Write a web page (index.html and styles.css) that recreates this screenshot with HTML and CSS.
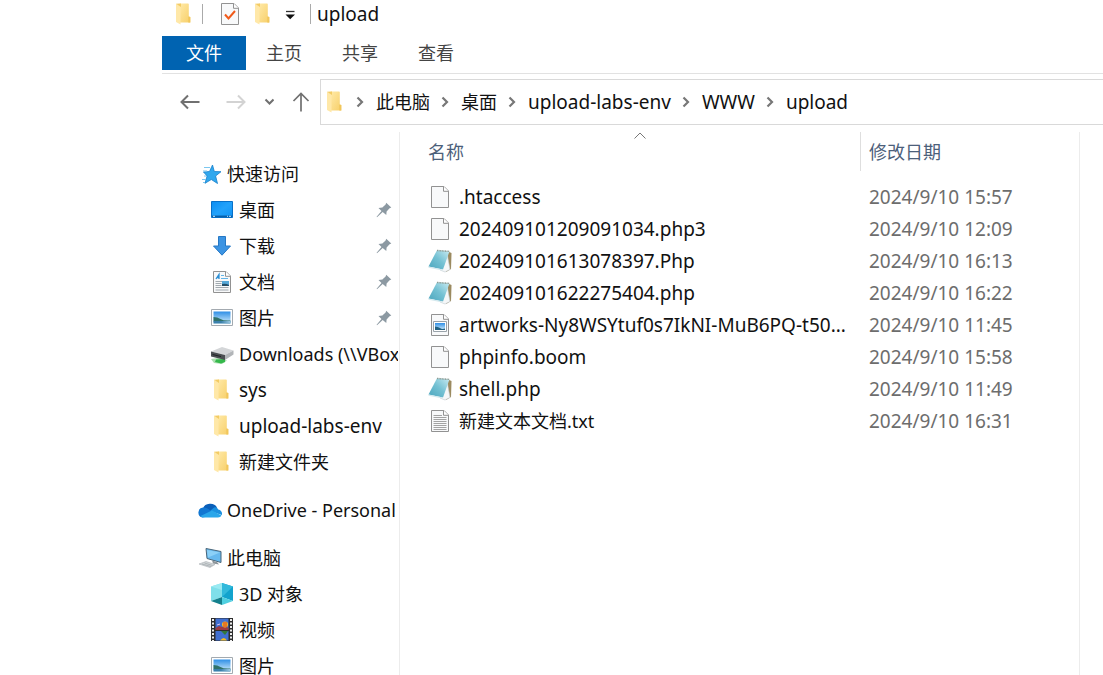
FILE: index.html
```html
<!DOCTYPE html>
<html lang="zh-CN">
<head>
    <meta charset="UTF-8">
    <meta name="viewport" content="width=device-width, initial-scale=1.0">
    <title>upload</title>
    <link rel="stylesheet" href="styles.css">
</head>
<body>
    <svg class="sprite" aria-hidden="true">
        <defs>
            <linearGradient id="gFolder" x1="0" y1="0" x2="1" y2="1">
                <stop offset="0" stop-color="#ffe9a6"/><stop offset="1" stop-color="#f7cf69"/>
            </linearGradient>
            <linearGradient id="gSky" x1="0" y1="0" x2="0" y2="1">
                <stop offset="0" stop-color="#2f8fe6"/><stop offset="1" stop-color="#d5effc"/>
            </linearGradient>
            <linearGradient id="gDesk" x1="0" y1="0" x2="1" y2="1">
                <stop offset="0" stop-color="#0a8df2"/><stop offset=".5" stop-color="#22a2fb"/><stop offset="1" stop-color="#1093f5"/>
            </linearGradient>
            <linearGradient id="gPad" x1="1" y1="0" x2="0" y2="1">
                <stop offset="0" stop-color="#c9ebf2"/><stop offset=".5" stop-color="#74c1d3"/><stop offset="1" stop-color="#4aa5bd"/>
            </linearGradient>
        </defs>
        <symbol id="folder" viewBox="0 0 24 24">
            <path d="M8 1.500h8q.8 0 .8.8V14.500l1.500.5v5.500H8z" fill="url(#gFolder)"/>
            <path d="M16.300 14.500l2 .5v5.500h-2z" fill="#f1c65c"/>
            <path d="M4 1.800L8.500 4V22.500L4 20z" fill="#ffe8a8"/>
            <path d="M4 1.800L8 1.500H9V5z" fill="#f3cb64"/>
        </symbol>
        <symbol id="file" viewBox="0 0 24 24">
            <path d="M3.500 1.500H16L20.500 6V22.500H3.500z" fill="#f8f9fa" stroke="#929292"/>
            <path d="M15.500 1.500V6.300H20.500" fill="#fff" stroke="#929292"/>
        </symbol>
        <symbol id="checked" viewBox="0 0 24 24">
            <use href="#file"/>
            <path d="M7 12.500L10.500 16.500L17 9" fill="none" stroke="#f05a1a" stroke-width="2"/>
        </symbol>
        <symbol id="text" viewBox="0 0 24 24">
            <use href="#file"/>
            <path d="M5.500 6.500H14M5.500 8.500H18.500M5.500 10.500H18.500M5.500 12.500H18.500M5.500 14.500H18.500M5.500 16.500H18.500M5.500 18.500H18.500M5.500 20.500H18.500" stroke="#a3a3a3"/>
        </symbol>
        <symbol id="image" viewBox="0 0 24 24">
            <use href="#file"/>
            <path d="M5.500 8.500H18.500V18.500H5.500z" fill="#fff" stroke="#9aa3aa"/>
            <path d="M7 10H17V17H7z" fill="url(#gSky)"/>
            <path d="M7 13.500q3 0 5 1.500t5 .5V17H7z" fill="#236283"/>
        </symbol>
        <symbol id="notepad" viewBox="0 0 24 24">
            <path d="M20 2.500L23.500 4L23 20L18 23z" fill="#9b8a60"/>
            <path d="M19 4L22 20.500L17 23L12 21z" fill="#f5f7f8" stroke="#c1cbd0" stroke-width=".6"/>
            <path d="M9 1.200L21.500 2.300L15 20.500L.5 17.500z" fill="url(#gPad)"/>
            <path d="M.5 17.500L15 20.500L14.500 21.500L.5 18.700z" fill="#d5e9ee"/>
            <path d="M9 1.500L21.500 2.400" stroke="#8d9a92" stroke-width="1.500" stroke-dasharray="1 .6"/>
        </symbol>
        <symbol id="star" viewBox="0 0 24 24">
            <path d="M14.500 3L16.300 9.500L23 9.700L17.600 14L19.500 21.500L13.300 17.500L7 21.300L9.100 14L5.500 10L11.500 9.500z" fill="#30a8ee" stroke="#1680cb" stroke-width=".8"/>
            <path d="M6 5.500H12M5 9H9M6 14H8M4 17.500H8M5 20.500H7" stroke="#7cc7ef" stroke-width="1.100"/>
        </symbol>
        <symbol id="desktop" viewBox="0 0 24 24">
            <path d="M1.500 3.500H22.500V19.500H1.500z" fill="url(#gDesk)" stroke="#0870c8"/>
            <path d="M2 18.300H22" stroke="#075fa9" stroke-width="1.500"/>
            <path d="M3 18.300h2M17 18.300h1M19 18.300h2" stroke="#c9e9ff"/>
        </symbol>
        <symbol id="download" viewBox="0 0 24 24">
            <path d="M8.500 2.500H15.500V12H20.500L12 21.200L3.500 12H8.500z" fill="#3c94e3" stroke="#2678c5"/>
        </symbol>
        <symbol id="document" viewBox="0 0 24 24">
            <use href="#file"/>
            <path d="M6 9L9 4.500V9M7 7.500h2" fill="none" stroke="#2b8fd6" stroke-width="1.300"/>
            <path d="M11 5.500h3M11 8.500h7" stroke="#63b5e8" stroke-width="1.200"/>
            <path d="M5.500 11.500h7M5.500 13.500h6M5.500 15.500h6M5.500 17.500h13M5.500 20h13" stroke="#a2aab0"/>
            <path d="M12 11H19V16H12z" fill="#56a8d8"/>
            <path d="M12 14q4-1 7 1v1h-7z" fill="#254e68"/>
        </symbol>
        <symbol id="picture" viewBox="0 0 24 24">
            <path d="M1.500 3.500H22.500V19.500H1.500z" fill="#fff" stroke="#a3aab0"/>
            <path d="M3.500 5.500H20.500V17.500H3.500z" fill="url(#gSky)"/>
            <path d="M3.500 11q4 0 7 2t10 1.500v1H3.500z" fill="#30726a"/>
            <path d="M3.500 15H20.500V17.500H3.500z" fill="#3b80ac"/>
            <path d="M11 16l9.500-1v2z" fill="#9fcbe2"/>
        </symbol>
        <symbol id="drive" viewBox="0 0 24 24">
            <path d="M1 17L8 16L17 18.500L12 22L4 21z" fill="#a9dfae"/>
            <path d="M6 17.500L15 17V20L11 21.500L5 20z" fill="#35b84b"/>
            <path d="M1 9.500L12 5L23.500 8.500L15 13z" fill="#d4d6d8"/>
            <path d="M1 9.500L15 13V18L1 14.500z" fill="#4b4f52"/>
            <path d="M15 13L23.500 8.500V12.500L15 18z" fill="#b2b5b8"/>
            <path d="M2.500 12.500L11 14.500" stroke="#1f2224"/>
        </symbol>
        <symbol id="cloud" viewBox="0 0 24 24">
            <path d="M5 10.500a7.500 6.500 0 0 1 14-1L13 15z" fill="#0a5fb9"/>
            <path d="M4.500 19.500A5 5 0 0 1 5 9.600Q8 9 11 11.500L17 17z" fill="#1277d2"/>
            <path d="M12 13L16 9.500Q19 8.500 20.200 11.500A4.200 4.200 0 0 1 23.800 17z" fill="#1a90df"/>
            <path d="M2.500 18L14 12.500L23.500 17.500Q22.500 19.500 20 19.500H4.500z" fill="#29a6ea"/>
        </symbol>
        <symbol id="computer" viewBox="0 0 24 24">
            <path d="M8 2.500L23 5.500V16.500L9 12.500z" fill="#67b9ee" stroke="#496579"/>
            <path d="M9 4L22 6.500L10 11.500z" fill="#8bd0f7"/>
            <path d="M14 14.500L19 16L21 18.500L15 17.500z" fill="#8c9499"/>
            <path d="M1 18L8 15.500L17 18.500L12 21.500z" fill="#d4d8da" stroke="#a7adb1" stroke-width=".6"/>
            <path d="M4 18l9 2.500M6.500 17l8 2.500" stroke="#969da1" stroke-width=".6"/>
        </symbol>
        <symbol id="cube" viewBox="0 0 24 24">
            <path d="M1 4.500L12 1V15L1 19z" fill="#7fdfea"/>
            <path d="M12 1L23 4.500V19L12 15z" fill="#12a3cd"/>
            <path d="M12 1L23 4.500L12 15z" fill="#31b9db"/>
            <path d="M1 4.500L12 1L12 8z" fill="#9aeaf2"/>
            <path d="M1 19L12 15V23z" fill="#14808d"/>
            <path d="M12 15L23 19L12 23z" fill="#4fd0e0"/>
        </symbol>
        <symbol id="video" viewBox="0 0 24 24">
            <path d="M1 0H23V23H1z" fill="#2d2d2d"/>
            <path d="M5.500 .5H18.500V11.500H5.500zM5.500 13H18.500V22.500H5.500z" fill="#416fd0"/>
            <path d="M3 1V23M21 1V23" stroke="#eee" stroke-width="2" stroke-dasharray="2 1.500"/>
            <path d="M5.500 10L9 8l3 1 3-1 3.500 2v2h-13z" fill="#9b3b43"/>
            <circle cx="15" cy="6.500" r="3" fill="#f4be20"/>
            <path d="M14 4v5M16 4v5" stroke="#d73127"/>
            <path d="M11 13h7l-3 4z" fill="#33783a"/>
            <path d="M10 22.500q4-5 7 0z" fill="#f4be20"/>
            <path d="M7 7l3-1" stroke="#d7c3ee"/>
        </symbol>
        <symbol id="pin" viewBox="0 0 16 16">
            <path d="M10.200 .7L15.300 5.600L13.600 6.300L10.600 9.500L10.300 13L6.700 9.900L1 15.300L.6 14.800L5.500 8.900L2.500 5.900L6.400 5.500L9.600 2.500z" fill="#8c99a2"/>
        </symbol>
        <symbol id="chevron" viewBox="0 0 8 12">
            <path d="M1.500 1.500L6 6L1.500 10.500" fill="none" stroke="#777" stroke-width="2.200"/>
        </symbol>
    </svg>

    <div class="window">
        <header class="title-bar">
            <svg class="icon"><use href="#folder"/></svg>
            <div class="tools">
                <button class="tool" aria-label="属性"><svg class="icon"><use href="#checked"/></svg></button>
                <button class="tool" aria-label="新建文件夹"><svg class="icon"><use href="#folder"/></svg></button>
                <button class="tool" aria-label="自定义快速访问工具栏">
                    <svg class="customize" viewBox="0 0 12 12"><path d="M2 3.500H10.500" stroke="#333" stroke-width="1.300"/><path d="M1.500 6.500H11L6.200 11.300z" fill="#111"/></svg>
                </button>
            </div>
            <h1>upload</h1>
        </header>

        <nav class="tabs">
            <button class="tab active">文件</button>
            <button class="tab">主页</button>
            <button class="tab">共享</button>
            <button class="tab">查看</button>
        </nav>

        <div class="address-row">
            <div class="history">
                <button class="tool back" aria-label="后退"><svg class="arrow" viewBox="0 0 20 20"><path d="M19.500 10H2M8 3.500L1.500 10L8 16.500" fill="none" stroke="#707070" stroke-width="2"/></svg></button>
                <button class="tool" aria-label="前进" disabled><svg class="arrow" viewBox="0 0 20 20"><path d="M.5 10H18M12 3.500L18.500 10L12 16.500" fill="none" stroke="#d3d3d3" stroke-width="2"/></svg></button>
                <button class="tool" aria-label="最近浏览的位置"><svg class="recent" viewBox="0 0 10 8"><path d="M1.500 1.500L5.500 5.500L9.500 1.500" fill="none" stroke="#707070" stroke-width="2"/></svg></button>
                <button class="tool" aria-label="上移"><svg class="arrow" viewBox="0 0 20 20"><path d="M9 19.500V2M1.500 9L9 1.500L16.500 9" fill="none" stroke="#707070" stroke-width="1.700"/></svg></button>
            </div>
            <nav class="address">
                <svg class="icon"><use href="#folder"/></svg>
                <svg class="chevron"><use href="#chevron"/></svg>
                <button class="crumb cjk">此电脑</button>
                <svg class="chevron"><use href="#chevron"/></svg>
                <button class="crumb cjk">桌面</button>
                <svg class="chevron"><use href="#chevron"/></svg>
                <button class="crumb">upload-labs-env</button>
                <svg class="chevron"><use href="#chevron"/></svg>
                <button class="crumb">WWW</button>
                <svg class="chevron"><use href="#chevron"/></svg>
                <button class="crumb">upload</button>
            </nav>
        </div>

        <div class="main">
            <aside class="sidebar">
                <ul class="tree">
                    <li><a class="node cjk" href="#"><svg class="icon"><use href="#star"/></svg>快速访问</a></li>
                    <li><a class="node child cjk" href="#"><svg class="icon"><use href="#desktop"/></svg>桌面<svg class="pin"><use href="#pin"/></svg></a></li>
                    <li><a class="node child cjk" href="#"><svg class="icon"><use href="#download"/></svg>下载<svg class="pin"><use href="#pin"/></svg></a></li>
                    <li><a class="node child cjk" href="#"><svg class="icon"><use href="#document"/></svg>文档<svg class="pin"><use href="#pin"/></svg></a></li>
                    <li><a class="node child cjk" href="#"><svg class="icon"><use href="#picture"/></svg>图片<svg class="pin"><use href="#pin"/></svg></a></li>
                    <li><a class="node child long" href="#"><svg class="icon"><use href="#drive"/></svg>Downloads (\\VBox</a></li>
                    <li><a class="node child" href="#"><svg class="icon"><use href="#folder"/></svg>sys</a></li>
                    <li><a class="node child" href="#"><svg class="icon"><use href="#folder"/></svg>upload-labs-env</a></li>
                    <li><a class="node child cjk" href="#"><svg class="icon"><use href="#folder"/></svg>新建文件夹</a></li>
                </ul>
                <ul class="tree">
                    <li><a class="node long" href="#"><svg class="icon"><use href="#cloud"/></svg>OneDrive - Personal</a></li>
                </ul>
                <ul class="tree">
                    <li><a class="node cjk" href="#"><svg class="icon"><use href="#computer"/></svg>此电脑</a></li>
                    <li><a class="node child cjk" href="#"><svg class="icon"><use href="#cube"/></svg>3D 对象</a></li>
                    <li><a class="node child cjk" href="#"><svg class="icon"><use href="#video"/></svg>视频</a></li>
                    <li><a class="node child cjk" href="#"><svg class="icon"><use href="#picture"/></svg>图片</a></li>
                </ul>
            </aside>

            <div class="files">
                <table>
                    <thead>
                        <tr>
                            <th class="name">
                                <button class="sort">名称</button>
                                <svg class="sort-arrow" viewBox="0 0 12 8"><path d="M.5 6.500L6 1L11.500 6.500" fill="none" stroke="#777"/></svg>
                            </th>
                            <th class="modified"><button class="sort">修改日期</button></th>
                        </tr>
                    </thead>
                    <tbody>
                        <tr>
                            <td><div class="file"><svg class="icon"><use href="#file"/></svg><span>.htaccess</span></div></td>
                            <td class="date">2024/9/10 15:57</td>
                        </tr>
                        <tr>
                            <td><div class="file"><svg class="icon"><use href="#file"/></svg><span>202409101209091034.php3</span></div></td>
                            <td class="date">2024/9/10 12:09</td>
                        </tr>
                        <tr>
                            <td><div class="file"><svg class="icon"><use href="#notepad"/></svg><span>202409101613078397.Php</span></div></td>
                            <td class="date">2024/9/10 16:13</td>
                        </tr>
                        <tr>
                            <td><div class="file"><svg class="icon"><use href="#notepad"/></svg><span>202409101622275404.php</span></div></td>
                            <td class="date">2024/9/10 16:22</td>
                        </tr>
                        <tr>
                            <td><div class="file"><svg class="icon"><use href="#image"/></svg><span>artworks-Ny8WSYtuf0s7IkNI-MuB6PQ-t50...</span></div></td>
                            <td class="date">2024/9/10 11:45</td>
                        </tr>
                        <tr>
                            <td><div class="file"><svg class="icon"><use href="#file"/></svg><span>phpinfo.boom</span></div></td>
                            <td class="date">2024/9/10 15:58</td>
                        </tr>
                        <tr>
                            <td><div class="file"><svg class="icon"><use href="#notepad"/></svg><span>shell.php</span></div></td>
                            <td class="date">2024/9/10 11:49</td>
                        </tr>
                        <tr>
                            <td><div class="file cjk"><svg class="icon"><use href="#text"/></svg><span>新建文本文档.txt</span></div></td>
                            <td class="date">2024/9/10 16:31</td>
                        </tr>
                    </tbody>
                </table>
            </div>
        </div>
    </div>
</body>
</html>
```

FILE: styles.css
```css
* {
    box-sizing: border-box;
}
body {
    margin: 0;
    background: #fff;
    color: #111;
    font-family: "Noto Sans", "Noto Sans CJK SC", sans-serif;
    font-size: 19px;
    line-height: 28px;
}
button {
    padding: 0;
    border: 0;
    background: none;
    color: inherit;
    font: inherit;
}
svg {
    display: block;
    flex: none;
}
.sprite {
    position: absolute;
    width: 0;
    height: 0;
}
.icon {
    width: 24px;
    height: 24px;
}
.cjk {
    font-size: 18px;
}
.window {
    display: flex;
    flex-direction: column;
    height: 100vh;
    margin-left: 162px;
    overflow: hidden;
}

/* title bar */
.title-bar {
    display: flex;
    align-items: center;
    gap: 6px;
    padding: 0 0 8px 10px;
}
.title-bar h1 {
    margin: 0;
    font-size: 19px;
    font-weight: 400;
}
.tools {
    display: flex;
    align-items: center;
    gap: 9px;
    height: 20px;
    padding: 0 14px 0 15px;
    border: 1px solid #aaa;
    border-width: 0 1px;
}
.customize {
    width: 12px;
    height: 12px;
}

/* ribbon tabs */
.tabs {
    display: flex;
    padding-bottom: 3px;
    border-bottom: 1px solid #e2e2e2;
}
.tab {
    height: 34px;
    padding: 0 20px;
    color: #444;
    font-size: 18px;
}
.tab.active {
    padding: 0 24px;
    background: #0063b1;
    color: #fff;
}

/* address bar */
.address-row {
    display: flex;
    align-items: center;
    padding: 5px 0 7px;
}
.history {
    display: flex;
    align-items: center;
    gap: 18px;
    width: 158px;
    padding-left: 18px;
}
.back {
    margin-right: 8px;
}
.arrow {
    width: 20px;
    height: 20px;
}
.recent {
    width: 10px;
    height: 8px;
}
.address {
    display: flex;
    flex: 1;
    align-items: center;
    gap: 11px;
    height: 46px;
    padding-left: 2px;
    border: 1px solid #d9d9d9;
    border-right: 0;
}
.address .icon {
    margin-right: -2px;
}
.chevron {
    width: 8px;
    height: 12px;
}
.crumb {
    margin-left: 1px;
}

/* navigation pane */
.main {
    display: flex;
    flex: 1;
    min-height: 0;
}
.sidebar {
    flex: none;
    width: 238px;
    padding: 24px 1px 0 36px;
    border-right: 1px solid #ececec;
    overflow: hidden;
}
.tree {
    margin: 0 0 12px;
    padding: 0;
    list-style: none;
}
.node {
    display: flex;
    align-items: center;
    gap: 5px;
    height: 36px;
    color: inherit;
    text-decoration: none;
    white-space: nowrap;
    overflow: hidden;
}
.child {
    padding-left: 12px;
}
.long {
    font-size: 18px;
}
.pin {
    width: 16px;
    height: 16px;
    margin: 0 6px 0 auto;
}

/* file list */
.files {
    flex: 1;
    min-width: 0;
    margin-right: 23px;
    padding-left: 20px;
    border-right: 1px solid #ececec;
}
table {
    width: 100%;
    border-collapse: collapse;
    table-layout: fixed;
}
th {
    position: relative;
    padding: 0 0 10px;
    color: #4c607a;
    font-weight: 400;
}
.modified {
    width: 219px;
}
.sort {
    display: block;
    width: 100%;
    height: 39px;
    padding-left: 8px;
    font-size: 18px;
    text-align: left;
}
.modified .sort {
    border-left: 1px solid #dedede;
}
.sort-arrow {
    position: absolute;
    top: 0;
    left: 50%;
    width: 12px;
    height: 8px;
    margin-left: -6px;
}
td {
    height: 32px;
    padding: 0 0 0 9px;
    white-space: nowrap;
}
td:first-child {
    padding-left: 8px;
}
.file {
    display: flex;
    align-items: center;
    gap: 7px;
}
.date {
    color: #6d6d6d;
}
```
